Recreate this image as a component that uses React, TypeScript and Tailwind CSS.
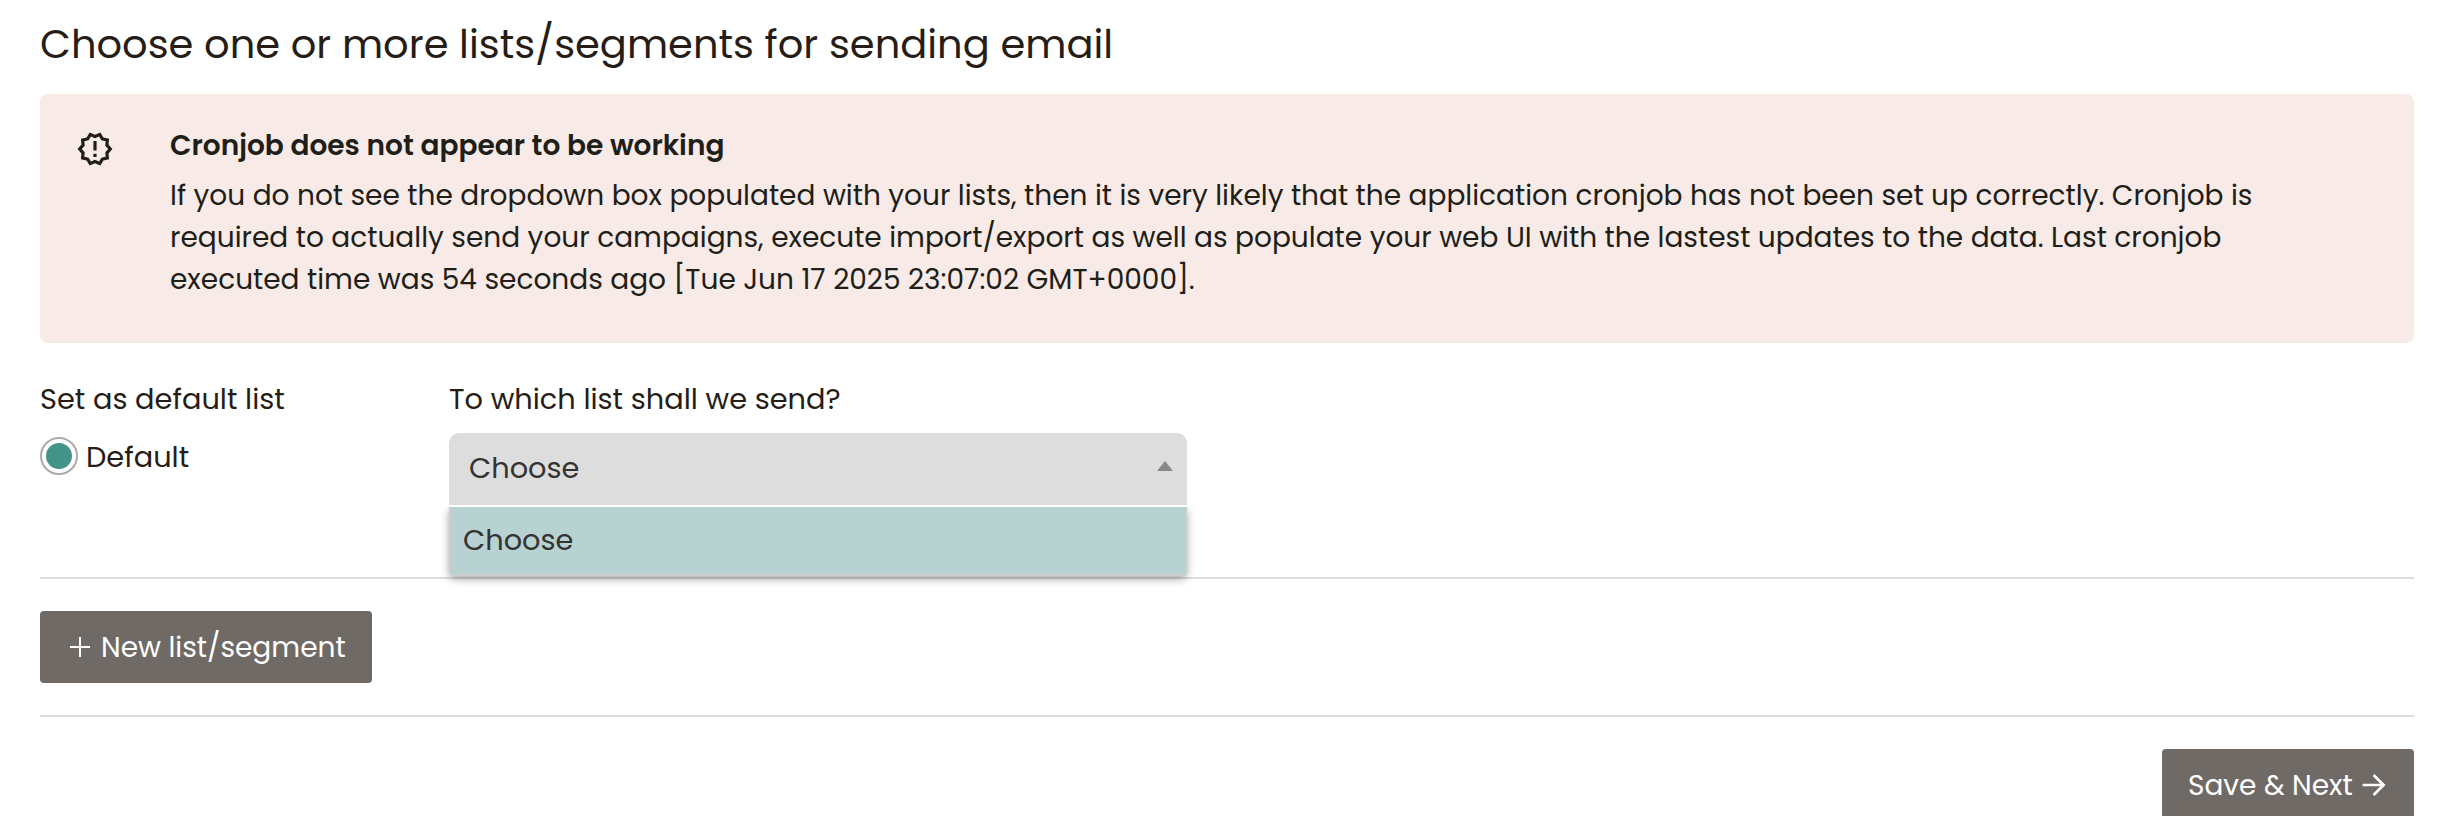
import { useState } from 'react';
import type { ReactNode } from 'react';
import { MdOutlineNewReleases } from 'react-icons/md';
import { clsx } from 'clsx';

const cronjobNotice = [
  'If you do not see the dropdown box populated with your lists, then it is very likely that the application cronjob has not been set up correctly. Cronjob is',
  'required to actually send your campaigns, execute import/export as well as populate your web UI with the lastest updates to the data. Last cronjob',
  'executed time was 54 seconds ago [Tue Jun 17 2025 23:07:02 GMT+0000].',
];

const PlusIcon = () => (
  <svg width="20" height="20" viewBox="0 0 20 20" fill="none" stroke="currentColor" strokeWidth="2">
    <path d="M10 0v20M0 10h20" />
  </svg>
);

const ArrowIcon = () => (
  <svg width="24" height="24" viewBox="0 0 24 24" fill="none" stroke="currentColor" strokeWidth="2.7">
    <path d="M0.7 12H22M11.6 2L21.6 12l-10 10" />
  </svg>
);

function Button({ className, children }: { className?: string; children: ReactNode }) {
  return (
    <button
      className={clsx(
        'flex h-[72px] shrink-0 items-center whitespace-nowrap rounded-[4px] bg-[#706a66] text-[28px] text-white',
        className
      )}
    >
      {children}
    </button>
  );
}

function Alert() {
  return (
    <section className="flex h-[249px] items-start gap-14 rounded-lg bg-[#f8eae7] pl-9 pt-[31px] text-[28px] text-[#201e18]">
      <MdOutlineNewReleases className="mt-[5px] size-[38px] shrink-0" />
      <div className="whitespace-nowrap">
        <h2 className="mb-2 font-semibold">Cronjob does not appear to be working</h2>
        {cronjobNotice.map((line) => (
          <p key={line}>{line}</p>
        ))}
      </div>
    </section>
  );
}

function ListSelect() {
  const [open, setOpen] = useState(true);

  return (
    <div className="relative mt-[13px] w-[738px] text-[#333333]">
      <button
        onClick={() => setOpen(!open)}
        className="flex h-[72px] w-full items-center justify-between rounded-t-[10px] bg-[#dddddd] pb-[2px] pl-5 pr-[14px]"
      >
        <span>Choose</span>
        <svg width="16" height="10" viewBox="0 0 16 10" className="mb-1">
          <path d="M8 0l8 10H0z" fill="#888888" />
        </svg>
      </button>
      {open && (
        <ul className="absolute left-0 top-[74px] z-10 w-full rounded-b-[6px] border-x-2 border-b-2 border-[#cdcdcd] bg-white shadow-[0_3px_8px_rgba(0,0,0,0.35)] [clip-path:inset(0_-16px_-20px_-16px)]">
          <li className="h-[67px] bg-[#b8d2d2] pl-3 pt-3">Choose</li>
        </ul>
      )}
    </div>
  );
}

export default function App() {
  return (
    <main className="h-[816px] overflow-hidden bg-white px-10 pr-8 pt-4 font-['Poppins','Inter',sans-serif] text-[28.8px] leading-[42px] text-[#261d17]">
      <h1 className="mb-[22px] text-[40px] leading-[56px]">
        Choose one or more lists/segments for sending email
      </h1>

      <Alert />

      <div className="mt-[35px] flex h-[199px] items-start">
        <div className="w-[409px]">
          <p>Set as default list</p>
          <label className="mt-4 flex items-start gap-2">
            <span className="mt-px flex size-[38px] items-center justify-center rounded-full border-2 border-[#aaaaaa]">
              <span className="size-[26px] rounded-full bg-[#439488]" />
            </span>
            <span>Default</span>
          </label>
        </div>
        <div>
          <p>To which list shall we send?</p>
          <ListSelect />
        </div>
      </div>

      <hr className="h-[2px] border-0 bg-[#dddddd]" />
      <Button className="my-8 w-[332px] gap-[11px] pl-[30px]">
        <PlusIcon />
        <span className="mt-px">New list/segment</span>
      </Button>
      <hr className="h-[2px] border-0 bg-[#dddddd]" />
      <div className="mt-8 flex justify-end">
        <Button className="w-[252px] gap-[9px] pl-[26px]">
          <span className="mt-px">Save &amp; Next</span>
          <ArrowIcon />
        </Button>
      </div>
    </main>
  );
}
